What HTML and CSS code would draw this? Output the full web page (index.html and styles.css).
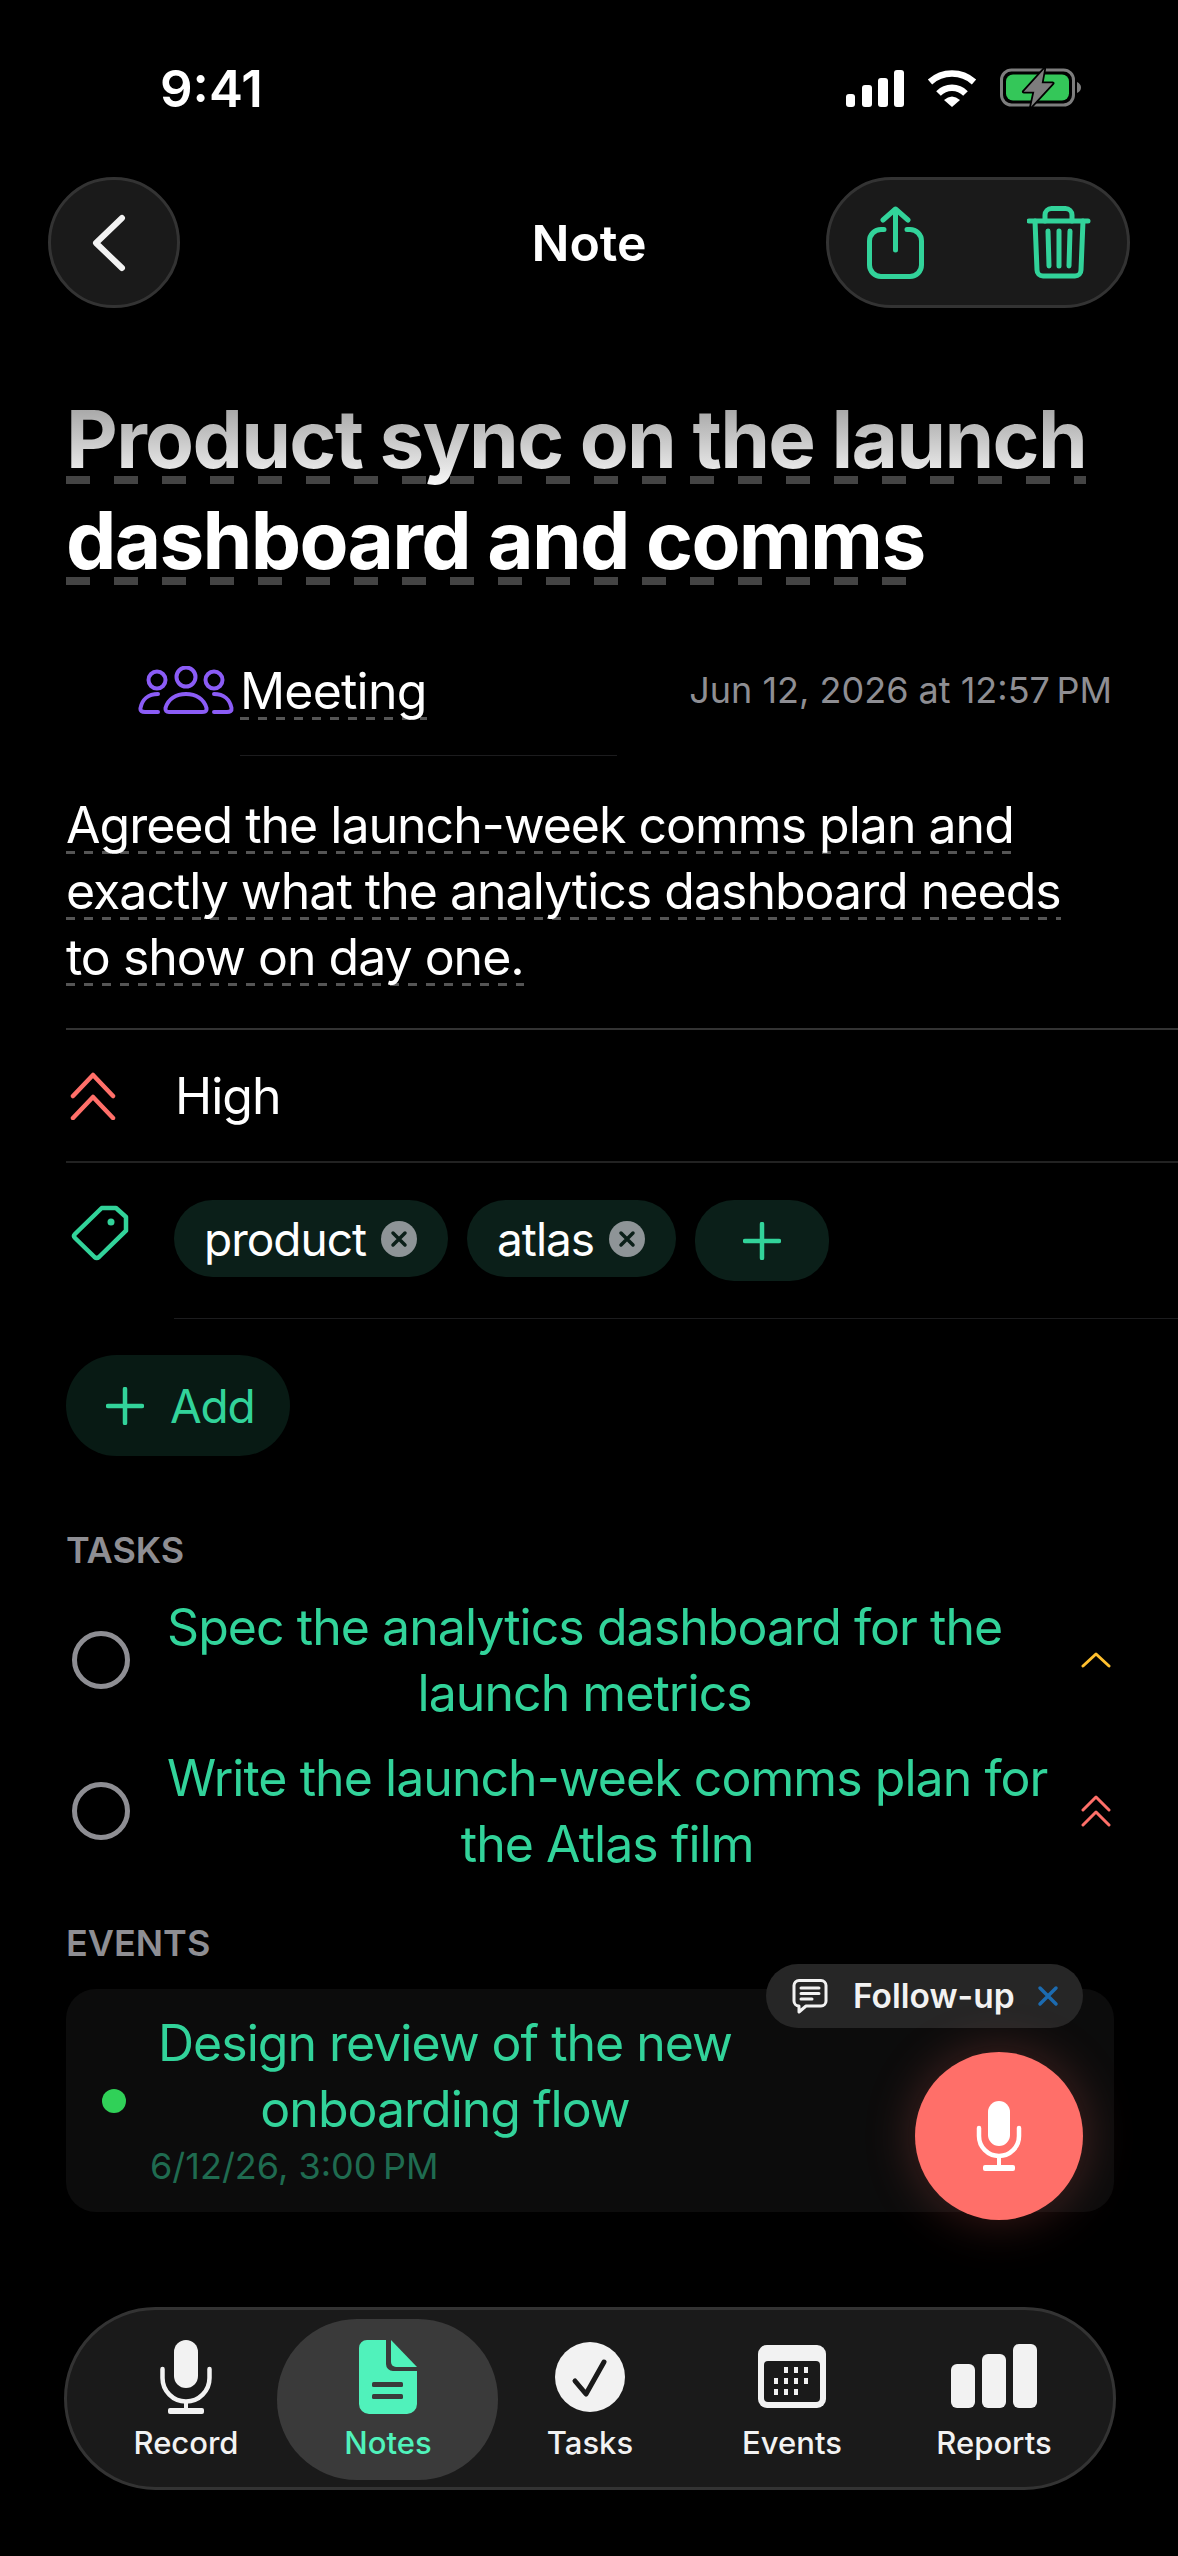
FILE: index.html
```html
<!DOCTYPE html>
<html lang="en">
<head>
    <meta charset="UTF-8">
    <meta name="viewport" content="width=device-width, initial-scale=1.0">
    <title>Note</title>
    <link rel="stylesheet" href="styles.css">
</head>
<body>
<div class="screen">
    <div class="status-bar">
        <span class="clock">9:41</span>
        <div class="status-icons">
            <svg width="58" height="37" viewBox="0 0 58 37" fill="#fff"><rect x="0" y="24" width="9" height="13" rx="3"/><rect x="16" y="15" width="10" height="22" rx="3"/><rect x="32" y="8" width="10" height="29" rx="3"/><rect x="48" y="0" width="10" height="37" rx="3"/></svg>
            <svg width="50" height="37" viewBox="0 0 50 37"><g fill="none" stroke="#fff" stroke-width="6.5"><path d="M3 12A33 33 0 0 1 47 12"/><path d="M11.5 23.5A19 19 0 0 1 38.5 23.5"/></g><path d="M17 30Q25 23 33 30L25 37Z" fill="#fff"/></svg>
            <svg width="82" height="40" viewBox="0 0 82 40"><rect x="1.5" y="2" width="72" height="35" rx="10" fill="none" stroke="#7d7d7d" stroke-width="3"/><rect x="6" y="6.5" width="63" height="26" rx="7" fill="#34c759"/><path d="M77 14Q81 16 81 19.5Q81 23 77 25Z" fill="#7d7d7d"/><path d="M44.3 1L23.7 23.7H34.3L31 38.7L52.7 15.3H41.7Z" fill="#7d7d7d" stroke="#000" stroke-width="3.5" stroke-linejoin="round" paint-order="stroke"/></svg>
        </div>
    </div>

    <header class="nav">
        <button class="round-btn back-btn">
            <svg width="36" height="62" viewBox="0 0 36 62" fill="none" stroke="#f2f2f2" stroke-width="6" stroke-linecap="round" stroke-linejoin="round"><path d="M31 6L5 31L31 56"/></svg>
        </button>
        <span class="nav-title">Note</span>
        <div class="round-btn action-pill">
            <svg width="58" height="74" viewBox="0 0 58 74" fill="none" stroke="#32d39a" stroke-width="5" stroke-linecap="round" stroke-linejoin="round"><path d="M17 23.5H14A11.5 11.5 0 0 0 2.5 35V59A11.5 11.5 0 0 0 14 70.5H43A11.5 11.5 0 0 0 54.5 59V35A11.5 11.5 0 0 0 43 23.5H40"/><path d="M28.5 44V3M16 14L28.5 3L41 14"/></svg>
            <svg width="64" height="74" viewBox="0 0 64 74" fill="none" stroke="#32d39a" stroke-width="5" stroke-linecap="round" stroke-linejoin="round"><path d="M2 15H61"/><path d="M18 15V9A6.500 6.500 0 0 1 24.500 2.500H38.500A6.500 6.500 0 0 1 45 9V15"/><path d="M8 15L10 64A6 6 0 0 0 16 70H48A6 6 0 0 0 54 64L56 15"/><path d="M21 25L22 60M32 25V60M43 25L42 60"/></svg>
        </div>
    </header>

    <main class="content">
        <h1 class="note-title">
            <span class="title-line title-fade">Product sync on the launch</span>
            <span class="title-line">dashboard and comms</span>
        </h1>

        <div class="meta-row">
            <svg class="meeting-icon" width="97" height="50" viewBox="0 0 97 50" fill="none" stroke="#8b5cf6" stroke-width="4" stroke-linecap="round" stroke-linejoin="round"><circle cx="19" cy="14" r="8.500"/><circle cx="48" cy="11" r="9.500"/><circle cx="76" cy="14" r="8.500"/><path d="M31 46Q27 46 27.500 42C30 33 38 28 48 28C58 28 66 33 68.500 42C69 46 66 46 64 46Z"/><path d="M20 28C10 28 4 34 2.500 42C2 45 4 46 7 46H20"/><path d="M76 28C86 28 92 34 93.500 42C94 45 92 46 89 46H76"/></svg>
            <div class="meta-kind"><span class="dash-thin">Meeting</span></div>
            <span class="meta-date">Jun 12, 2026 at 12:57&#8201;PM</span>
        </div>

        <p class="summary"><span class="dash-thin">Agreed the launch-week comms plan and exactly what the analytics dashboard needs to show on day one.</span></p>

        <div class="priority-row">
            <svg class="row-icon" width="46" height="48" viewBox="0 0 46 48" fill="none" stroke="#ff6f69" stroke-width="4.500" stroke-linecap="round" stroke-linejoin="round"><path d="M3 24L23 3L43 24"/><path d="M3 46L23 25L43 46"/></svg>
            <span class="priority-label">High</span>
        </div>

        <div class="tags-row">
            <svg class="tag-icon" width="60" height="60" viewBox="0 0 60 60" fill="none" stroke="#32d39a" stroke-width="4.500" stroke-linejoin="round"><path d="M31.700 5H46L56 14V27.700L29 54Q26.700 56 24.500 54L5 35Q3 33 5 31Z"/><circle cx="41" cy="19" r="3.500" fill="#32d39a" stroke="none"/></svg>
            <div class="tags">
                <span class="tag">product
                    <svg width="36" height="36" viewBox="0 0 36 36"><circle cx="18" cy="18" r="18" fill="#8e9497"/><path d="M12 12L24 24M24 12L12 24" stroke="#0b1f19" stroke-width="3.500" stroke-linecap="round"/></svg>
                </span>
                <span class="tag">atlas
                    <svg width="36" height="36" viewBox="0 0 36 36"><circle cx="18" cy="18" r="18" fill="#8e9497"/><path d="M12 12L24 24M24 12L12 24" stroke="#0b1f19" stroke-width="3.500" stroke-linecap="round"/></svg>
                </span>
                <span class="tag tag-add">
                    <svg width="38" height="38" viewBox="0 0 38 38" stroke="#32d39a" stroke-width="4.500" stroke-linecap="round"><path d="M19 2V36M2 19H36"/></svg>
                </span>
            </div>
        </div>

        <button class="add-btn">
            <svg width="38" height="38" viewBox="0 0 38 38" stroke="#32d39a" stroke-width="4.500" stroke-linecap="round"><path d="M19 2V36M2 19H36"/></svg>
            Add
        </button>

        <h2 class="section-label tasks-label">TASKS</h2>
        <div class="task">
            <span class="check"></span>
            <span class="task-text">Spec the analytics dashboard for the<br>launch metrics</span>
            <svg class="task-flag" width="30" height="16" viewBox="0 0 30 16" fill="none" stroke="#ffc02e" stroke-width="3" stroke-linecap="round" stroke-linejoin="round"><path d="M2 14L15 2L28 14"/></svg>
        </div>
        <div class="task">
            <span class="check"></span>
            <span class="task-text">Write the launch-week comms plan for<br>the Atlas film</span>
            <svg class="task-flag" width="30" height="32" viewBox="0 0 30 32" fill="none" stroke="#ff6f69" stroke-width="3" stroke-linecap="round" stroke-linejoin="round"><path d="M2 15L15 2L28 15"/><path d="M2 30L15 17L28 30"/></svg>
        </div>

        <h2 class="section-label events-label">EVENTS</h2>
        <div class="event-card">
            <span class="event-dot"></span>
            <div class="event-body">
                <div class="event-title">Design review of the new<br>onboarding flow</div>
                <div class="event-date">6/12/26, 3:00&#8201;PM</div>
            </div>
        </div>
    </main>

    <div class="followup">
        <svg width="36" height="36" viewBox="0 0 36 36" fill="none" stroke="#f2f2f2" stroke-width="3" stroke-linejoin="round" stroke-linecap="round"><path d="M7 2.500H29A5 5 0 0 1 34 7.500V23A5 5 0 0 1 29 28H14L7 34V28A5 5 0 0 1 2 23V7.500A5 5 0 0 1 7 2.500Z"/><path d="M9 10H27M9 15.500H27M9 21H20"/></svg>
        <span>Follow-up</span>
        <svg width="22" height="22" viewBox="0 0 22 22" stroke="#1c6bb0" stroke-width="3.500" stroke-linecap="round"><path d="M3 3L19 19M19 3L3 19"/></svg>
    </div>

    <button class="mic-fab">
        <svg width="46" height="70" viewBox="0 0 46 70" fill="#fff"><rect x="12" y="0" width="22" height="45" rx="11"/><path d="M3 27V35A20 20 0 0 0 43 35V27" fill="none" stroke="#fff" stroke-width="4.500" stroke-linecap="round"/><rect x="21" y="54" width="4" height="12"/><rect x="7" y="64" width="32" height="6" rx="2"/></svg>
    </button>

    <nav class="tab-bar">
        <div class="tab">
            <svg width="52" height="74" viewBox="0 0 52 74" fill="#f2f2f2"><rect x="14" y="0" width="24" height="48" rx="12"/><path d="M2.500 29V38A23.500 23.500 0 0 0 49.500 38V29" fill="none" stroke="#f2f2f2" stroke-width="4.500" stroke-linecap="round"/><rect x="24" y="60" width="4" height="10"/><rect x="8" y="68" width="36" height="6" rx="2"/></svg>
            <span>Record</span>
        </div>
        <div class="tab tab-active">
            <svg width="58" height="74" viewBox="0 0 58 74"><path d="M8 0H27V24A7 7 0 0 0 34 31H58V64A10 10 0 0 1 48 74H10A10 10 0 0 1 0 64V8A8 8 0 0 1 8 0Z" fill="#50f2bb"/><path d="M32 0L58 27H37A5 5 0 0 1 32 22Z" fill="#50f2bb"/><rect x="13" y="42" width="31" height="5" rx="1.500" fill="#3a3a3a"/><rect x="13" y="54" width="31" height="5" rx="1.500" fill="#3a3a3a"/></svg>
            <span>Notes</span>
        </div>
        <div class="tab">
            <svg width="70" height="74" viewBox="0 0 70 74"><circle cx="35" cy="37" r="35" fill="#f2f2f2"/><path d="M20 41L31 54L49 22" fill="none" stroke="#1a1a1a" stroke-width="5" stroke-linecap="round" stroke-linejoin="round"/></svg>
            <span>Tasks</span>
        </div>
        <div class="tab">
            <svg width="70" height="74" viewBox="0 0 70 74"><rect x="1" y="5" width="68" height="63" rx="9" fill="#f2f2f2"/><rect x="7" y="21" width="56" height="41" rx="4" fill="#1a1a1a"/><g fill="#f2f2f2"><rect x="27" y="27" width="4" height="6"/><rect x="37" y="27" width="4" height="6"/><rect x="47" y="27" width="4" height="6"/><rect x="17" y="38" width="4" height="6"/><rect x="27" y="38" width="4" height="6"/><rect x="37" y="38" width="4" height="6"/><rect x="47" y="38" width="4" height="6"/><rect x="17" y="49" width="4" height="6"/><rect x="27" y="49" width="4" height="6"/><rect x="37" y="49" width="4" height="6"/></g></svg>
            <span>Events</span>
        </div>
        <div class="tab">
            <svg width="87" height="74" viewBox="0 0 87 74" fill="#f2f2f2"><rect x="0" y="24" width="24" height="44" rx="6"/><rect x="31" y="14" width="24" height="54" rx="6"/><rect x="62" y="4" width="24" height="64" rx="6"/></svg>
            <span>Reports</span>
        </div>
    </nav>
</div>
</body>
</html>
```

FILE: styles.css
```css
/* page frame */
html, body {
    margin: 0;
    background: #000;
}

.screen {
    position: relative;
    width: 1178px;
    height: 2556px;
    overflow: hidden;
    background: #000;
    color: #fff;
    font-family: Inter, "Noto Sans", sans-serif;
}

button {
    border: none;
    padding: 0;
    font: inherit;
}

/* status bar */
.status-bar {
    display: flex;
    justify-content: space-between;
    align-items: center;
    height: 48px;
    padding: 64px 96px 0 160px;
}

.clock {
    font-size: 51px;
    font-weight: 600;
}

.status-icons {
    display: flex;
    align-items: center;
    gap: 23px;
}

/* nav */
.nav {
    display: grid;
    grid-template-columns: 1fr auto 1fr;
    align-items: center;
    height: 131px;
    margin-top: 65px;
    padding: 0 48px;
}

.round-btn {
    display: flex;
    align-items: center;
    box-sizing: border-box;
    height: 131px;
    border: 3px solid #333;
    border-radius: 66px;
    background: #1a1a1a;
}

.back-btn {
    justify-content: center;
    width: 132px;
    padding-right: 10px;
}

.nav-title {
    font-size: 50px;
    font-weight: 600;
}

.action-pill {
    justify-self: end;
    justify-content: space-between;
    width: 304px;
    padding: 0 36px 0 38px;
}

/* scroll content */
.content {
    padding-left: 66px;
}

.note-title {
    margin: 80px 0 0;
    font-size: 80px;
    line-height: 101px;
    font-weight: 700;
    letter-spacing: -1.7px;
}

/* dashes are painted by hand, each line restarts the pattern */
.title-line {
    display: block;
    width: fit-content;
    background-image: repeating-linear-gradient(90deg, #444 0 24px, transparent 24px 48px);
    background-size: 100% 8px;
    background-position: 0 88px;
    background-repeat: no-repeat;
}

.title-fade {
    color: transparent;
    background-image: linear-gradient(#a2a2a2 15px, #fff 105px), repeating-linear-gradient(90deg, #444 0 24px, transparent 24px 48px);
    background-size: 100% 100%, 100% 8px;
    background-position: 0 0, 0 88px;
    -webkit-background-clip: text, border-box;
    background-clip: text, border-box;
}

.dash-thin {
    background-image: repeating-linear-gradient(90deg, #555 0 9px, transparent 9px 18px);
    background-size: 100% 3px;
    background-position: 0 56px;
    background-repeat: no-repeat;
    -webkit-box-decoration-break: clone;
    box-decoration-break: clone;
}

.meta-row {
    display: flex;
    align-items: flex-start;
    box-sizing: border-box;
    width: 1112px;
    height: 125px;
    margin-top: 41px;
    padding: 0 66px 0 72px;
}

.meeting-icon {
    margin-top: 35px;
    margin-right: 5px;
}

.meta-kind {
    box-sizing: border-box;
    width: 377px;
    height: 125px;
    padding-top: 30px;
    border-bottom: 1px solid #1c1c1e;
    font-size: 50px;
    line-height: 60px;
    letter-spacing: -0.8px;
}

.meta-date {
    margin-left: auto;
    margin-top: 37px;
    font-size: 36px;
    color: #8e8e93;
}

.summary {
    width: 1012px;
    margin: 36px 0 0;
    font-size: 50px;
    line-height: 66px;
    letter-spacing: -1px;
}

.priority-row {
    display: flex;
    align-items: center;
    height: 131px;
    margin-top: 38px;
    border-top: 2px solid #333;
    border-bottom: 2px solid #222;
}

.row-icon {
    margin: 0 59px 0 4px;
}

.priority-label {
    font-size: 50px;
    letter-spacing: -1px;
}

.tags-row {
    display: flex;
    height: 156px;
}

.tag-icon {
    margin: 40px 44px 0 4px;
}

.tags {
    flex: 1;
    display: flex;
    align-items: flex-start;
    gap: 19px;
    padding-top: 37px;
    border-bottom: 1px solid #1c1c1e;
}

.tag {
    display: flex;
    align-items: center;
    gap: 15px;
    height: 77px;
    padding: 0 31px 0 30px;
    border-radius: 39px;
    background: #0b1f19;
    font-size: 46px;
    letter-spacing: -1px;
}

.tag-add {
    height: 81px;
    width: 134px;
    box-sizing: border-box;
    justify-content: center;
    padding: 0;
}

.add-btn {
    display: flex;
    align-items: center;
    gap: 26px;
    height: 101px;
    width: 224px;
    margin: 36px 0 0;
    padding-left: 40px;
    box-sizing: border-box;
    border-radius: 51px;
    background: #081a14;
    color: #32d39a;
    font-size: 46px;
    letter-spacing: -1.2px;
}

.section-label {
    margin: 0;
    font-size: 36px;
    line-height: 44px;
    font-weight: 600;
    color: #8e8e93;
}

.tasks-label {
    margin-top: 72px;
    margin-bottom: 22px;
}

.events-label {
    margin-top: 44px;
    margin-bottom: 24px;
}

.task {
    display: flex;
    align-items: center;
    width: 1045px;
    height: 132px;
    margin-bottom: 19px;
}

.task:last-of-type {
    margin-bottom: 0;
}

.check {
    box-sizing: border-box;
    width: 58px;
    height: 58px;
    margin: 0 37px 0 6px;
    border: 5px solid #8e8e93;
    border-radius: 50%;
}

.task-text {
    white-space: nowrap;
    text-align: center;
    font-size: 50px;
    line-height: 66px;
    letter-spacing: -0.95px;
    color: #32d39a;
}

.task-flag {
    margin-left: auto;
}

.event-card {
    display: flex;
    align-items: center;
    box-sizing: border-box;
    width: 1048px;
    height: 223px;
    padding-left: 36px;
    border-radius: 30px;
    background: #0c0c0c;
}

.event-dot {
    width: 24px;
    height: 24px;
    margin-right: 24px;
    border-radius: 50%;
    background: #30d158;
}

.event-body {
    margin-top: -4px;
}

.event-title {
    margin-left: 8px;
    width: fit-content;
    text-align: center;
    font-size: 50px;
    line-height: 66px;
    letter-spacing: -1px;
    color: #32d39a;
}

.event-date {
    margin-top: 2px;
    font-size: 36px;
    line-height: 44px;
    color: #1f6b50;
}

/* floating items */
.followup {
    position: absolute;
    top: 1964px;
    left: 766px;
    display: flex;
    align-items: center;
    box-sizing: border-box;
    width: 317px;
    height: 64px;
    padding: 0 24px 0 26px;
    border-radius: 32px;
    background: #262626;
    font-size: 33.5px;
    font-weight: 600;
    color: #f2f2f2;
}

.followup span {
    margin: 0 auto 0 25px;
}

.mic-fab {
    position: absolute;
    top: 2052px;
    left: 915px;
    display: flex;
    align-items: center;
    justify-content: center;
    width: 168px;
    height: 168px;
    border-radius: 50%;
    background: #ff6f69;
    box-shadow: 0 0 50px rgba(255, 111, 105, 0.25);
}

.tab-bar {
    position: absolute;
    top: 2307px;
    left: 64px;
    display: flex;
    box-sizing: border-box;
    width: 1052px;
    height: 183px;
    padding: 0 18px;
    border: 3px solid #333;
    border-radius: 92px;
    background: #1a1a1a;
}

.tab {
    position: relative;
    flex: 1;
    display: flex;
    flex-direction: column;
    align-items: center;
    padding-top: 30px;
    font-size: 31px;
    font-weight: 500;
    color: #f2f2f2;
}

.tab svg,
.tab span {
    position: relative;
}

.tab span {
    margin-top: 10px;
}

.tab-active {
    color: #50f2bb;
}

.tab-active::before {
    content: "";
    position: absolute;
    top: 9px;
    left: -10px;
    width: 221px;
    height: 161px;
    border-radius: 80px;
    background: #3a3a3a;
}
```
